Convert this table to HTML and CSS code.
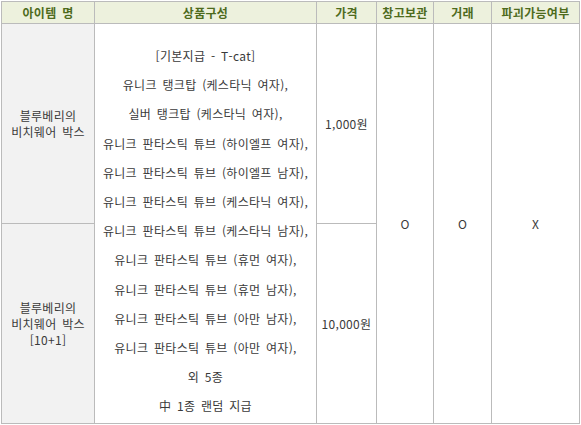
FILE: index.html
```html
<!DOCTYPE html>
<html lang="ko">
<head>
<meta charset="utf-8">
<link rel="stylesheet" href="styles.css">
</head>
<body>
<table class="tbl">
  <colgroup>
    <col class="c-name"><col class="c-prod"><col class="c-price"><col class="c-store"><col class="c-trade"><col class="c-break">
  </colgroup>
  <thead>
    <tr>
      <th>아이템 명</th>
      <th>상품구성</th>
      <th>가격</th>
      <th>창고보관</th>
      <th>거래</th>
      <th>파괴가능여부</th>
    </tr>
  </thead>
  <tbody>
    <tr class="row">
      <td class="name">블루베리의<br>비치웨어 박스</td>
      <td class="prod" rowspan="2">
        <div class="line">[기본지급 - T-cat]</div>
        <div class="line">유니크 탱크탑 (케스타닉 여자),</div>
        <div class="line">실버 탱크탑 (케스타닉 여자),</div>
        <div class="line">유니크 판타스틱 튜브 (하이엘프 여자),</div>
        <div class="line">유니크 판타스틱 튜브 (하이엘프 남자),</div>
        <div class="line">유니크 판타스틱 튜브 (케스타닉 여자),</div>
        <div class="line">유니크 판타스틱 튜브 (케스타닉 남자),</div>
        <div class="line">유니크 판타스틱 튜브 (휴먼 여자),</div>
        <div class="line">유니크 판타스틱 튜브 (휴먼 남자),</div>
        <div class="line">유니크 판타스틱 튜브 (아만 남자),</div>
        <div class="line">유니크 판타스틱 튜브 (아만 여자),</div>
        <div class="line">외 5종</div>
        <div class="line">中 1종 랜덤 지급</div>
      </td>
      <td class="price">1,000원</td>
      <td class="mark" rowspan="2">O</td>
      <td class="mark" rowspan="2">O</td>
      <td class="mark" rowspan="2">X</td>
    </tr>
    <tr class="row">
      <td class="name">블루베리의<br>비치웨어 박스<br>[10+1]</td>
      <td class="price">10,000원</td>
    </tr>
  </tbody>
</table>
</body>
</html>
```
FILE: styles.css
```css
html, body {
  margin: 0;
  padding: 0;
  background: #ffffff;
}
body {
  padding: 1px 0 0 1px;
  font-family: "Noto Sans CJK KR", "Liberation Sans", sans-serif;
  font-size: 12px;
  color: #3a3a3a;
  word-spacing: 2px;
  letter-spacing: 0.3px;
}
.tbl {
  border-collapse: collapse;
  table-layout: fixed;
  width: 579px;
}
.c-name { width: 93px; }
.c-prod { width: 222px; }
.c-price { width: 60px; }
.c-store { width: 57px; }
.c-trade { width: 58px; }
.c-break { width: 88px; }
.tbl th, .tbl td {
  border: 1px solid #bbbbbb;
  padding: 0;
  text-align: center;
}
.tbl th {
  height: 21px;
  background: #edf1dd;
  color: #4d6b1d;
  font-weight: bold;
  font-size: 12px;
  line-height: 21px;
}
.row td {
  height: 199px;
}
.name {
  background: #f2f2f2;
  line-height: 16px;
  vertical-align: middle;
}
.prod {
  vertical-align: top;
  padding-top: 17px !important;
}
.line {
  line-height: 29.2px;
  white-space: nowrap;
}
.price {
  vertical-align: middle;
}
.mark {
  vertical-align: middle;
}
```
